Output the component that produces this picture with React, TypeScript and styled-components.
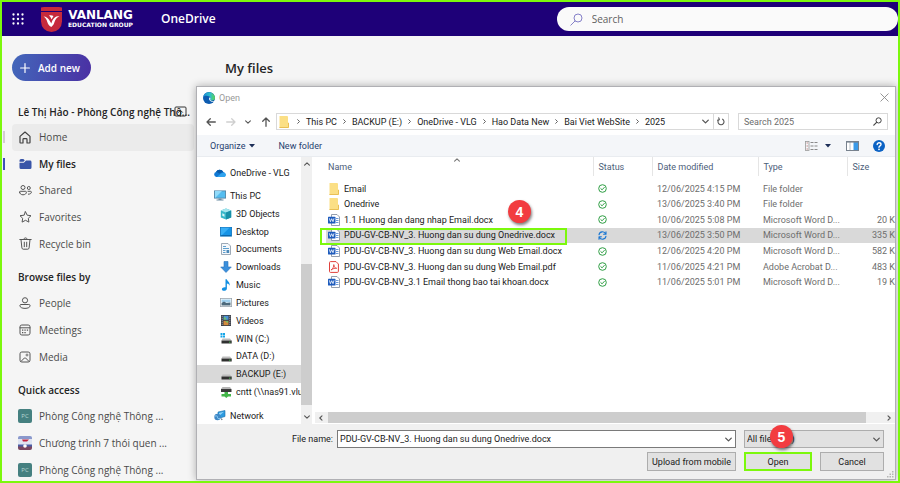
import React from 'react';
import styled, { createGlobalStyle } from 'styled-components';

const LIME = '#7cf80c';
const WEB_FONT = '"Open Sans", "Noto Sans", sans-serif';
const WIN_FONT = 'Roboto, "Noto Sans", sans-serif';

const Global = createGlobalStyle`
  * { box-sizing: border-box; }
  body { margin: 0; font: 400 10px/14px ${WEB_FONT}; color: #242424; }
  button, input, select { font: inherit; color: inherit; padding: 0; border: 0; background: none; border-radius: 0; outline: 0; }
  ul { list-style: none; margin: 0; padding: 0; }
  a { color: inherit; text-decoration: none; }
  svg { display: block; flex: none; }
`;

/* ---------- page shell ---------- */

const Page = styled.div`
  position: relative;
  height: 100vh;
  overflow: hidden;
  display: flex;
  flex-direction: column;
  background: #f5f5f5;
  border: 2px solid ${LIME};
`;

const TopBar = styled.header`
  display: grid;
  grid-template-columns: 13fr 8fr;
  align-items: center;
  height: 34px;
  flex: none;
  background: #1e0078;
  color: #fff;
`;

const Brand = styled.div`
  display: flex;
  align-items: center;
  padding-left: 10px;
`;

const IconButton = styled.button`
  display: flex;
  align-items: center;
  justify-content: center;
`;

const Logo = styled.a`
  display: flex;
  align-items: center;
  gap: 6px;
  margin: 0 24px 0 17px;
`;

const Wordmark = styled.span`
  display: flex;
  flex-direction: column;
  align-items: center;
  font-family: "DejaVu Sans", sans-serif;
  font-weight: 700;
`;

const WordmarkMain = styled.span`
  font-size: 12px;
  line-height: 11px;
`;

const WordmarkSub = styled.span`
  font-size: 6px;
  line-height: 8px;
  white-space: nowrap;
`;

const ProductName = styled.span`
  margin-left: 4px;
  font-size: 12px;
  line-height: 16px;
  font-weight: 600;
`;

const TopSearch = styled.label`
  display: flex;
  align-items: center;
  gap: 9px;
  height: 24px;
  padding-left: 13px;
  border-radius: 12px;
  background: #fafafa;
  color: #555;
  input { flex: 1; min-width: 0; }
  input::placeholder { color: #616161; opacity: 1; }
`;

const Body = styled.div`
  flex: 1;
  min-height: 0;
  display: flex;
`;

const Sidebar = styled.aside`
  width: 192px;
  flex: none;
  padding: 18px 0 0 10px;
`;

const AddNew = styled.button`
  display: flex;
  align-items: center;
  gap: 8px;
  height: 27px;
  padding: 0 11px 0 8px;
  border-radius: 14px;
  background: linear-gradient(100deg, #4368bb, #4a2fa3);
  color: #fff;
  font-weight: 600;
`;

const Owner = styled.h2`
  display: flex;
  align-items: center;
  margin: 24px 0 5px 6px;
  font-size: 10px;
  line-height: 14px;
  font-weight: 600;
  white-space: nowrap;
`;

const OwnerIcon = styled.span`
  margin-left: -16px;
`;

const GroupTitle = styled.h3`
  margin: 13px 0 6px 6px;
  font-size: 10px;
  line-height: 14px;
  font-weight: 600;
`;

const NavList = styled.ul<{ $height: number }>`
  display: flex;
  flex-direction: column;
  height: ${(p) => p.$height}px;
  li { flex: 1; display: flex; }
`;

const NavLink = styled.a<{ $hover?: boolean; $active?: boolean; $mark?: string }>`
  position: relative;
  flex: 1;
  display: flex;
  align-items: center;
  gap: 7px;
  padding-left: 6px;
  border-radius: 4px;
  white-space: nowrap;
  color: ${(p) => (p.$active ? '#242424' : '#4a4a4a')};
  font-weight: ${(p) => (p.$active ? 600 : 400)};
  background: ${(p) => (p.$hover ? '#ebebeb' : 'transparent')};
  &::before {
    content: '';
    position: absolute;
    left: -9px;
    width: 2px;
    height: 12px;
    background: ${(p) => p.$mark || 'transparent'};
  }
`;

const IconSlot = styled.span`
  width: 14px;
  display: flex;
  justify-content: center;
`;

const Tile = styled.span`
  display: flex;
  align-items: center;
  justify-content: center;
  width: 14px;
  height: 14px;
  border-radius: 2px;
  background: #458080;
  color: #b5d6d4;
  font-size: 6px;
  line-height: 8px;
`;

const Main = styled.main`
  flex: 1;
  padding: 22px 0 0 31px;
`;

const PageTitle = styled.h1`
  margin: 0;
  font-size: 13px;
  line-height: 20px;
  font-weight: 600;
`;

/* ---------- file dialog ---------- */

const Dialog = styled.section`
  position: absolute;
  top: 84px;
  left: 194px;
  right: 2px;
  display: flex;
  flex-direction: column;
  background: #fff;
  border: 1px solid #b0b0b4;
  box-shadow: 0 0 8px rgba(0, 0, 0, 0.3);
  font: 400 9px/12px ${WIN_FONT};
  color: #1a1a1a;
`;

const TitleBar = styled.div`
  display: flex;
  align-items: center;
  gap: 4px;
  height: 21px;
  padding: 0 6px;
  color: #999;
  button { margin-left: auto; }
`;

const AddressRow = styled.div`
  display: flex;
  align-items: center;
  height: 27px;
  padding: 0 7px 0 9px;
`;

const Arrows = styled.div`
  display: flex;
  align-items: center;
  justify-content: space-between;
  width: 65px;
  margin-right: 5px;
`;

const AddressBox = styled.div`
  flex: 1;
  display: flex;
  align-items: stretch;
  height: 17px;
  border: 1px solid #d9d9d9;
`;

const Crumbs = styled.nav`
  flex: 1;
  display: flex;
  align-items: center;
  gap: 5px;
  padding-left: 2px;
  white-space: nowrap;
  svg:first-child { margin-right: 2px; }
`;

const BoxButton = styled.button<{ $divided?: boolean }>`
  display: flex;
  align-items: center;
  justify-content: center;
  width: 15px;
  border-left: ${(p) => (p.$divided ? '1px solid #d9d9d9' : '0')};
`;

const DialogSearch = styled.label`
  display: flex;
  align-items: center;
  width: 150px;
  height: 17px;
  margin-left: 9px;
  padding: 0 5px;
  border: 1px solid #d9d9d9;
  input { flex: 1; min-width: 0; }
  input::placeholder { color: #6d6d6d; opacity: 1; }
`;

const CommandBar = styled.div`
  display: flex;
  align-items: center;
  height: 22px;
  padding: 0 10px 0 13px;
  background: #f4f6f9;
  border-bottom: 1px solid #e9ecf0;
  color: #25406e;
`;

const Command = styled.button<{ $gap?: number; $push?: boolean }>`
  display: flex;
  align-items: center;
  gap: 4px;
  margin-left: ${(p) => (p.$push ? 'auto' : `${p.$gap || 0}px`)};
`;

const Panes = styled.div`
  display: flex;
  height: 267px;
`;

const Tree = styled.nav`
  width: 104px;
  flex: none;
  overflow: hidden;
  padding-top: 7px;
`;

const Branch = styled.ul`
  height: 214px;
  margin: 6px 0;
  display: flex;
  flex-direction: column;
  li { flex: 1; display: flex; }
`;

const TreeItem = styled.button<{ $child?: boolean; $selected?: boolean }>`
  display: flex;
  align-items: center;
  gap: 4px;
  width: 100%;
  min-height: 17px;
  padding-left: ${(p) => (p.$child ? 23 : 17)}px;
  white-space: nowrap;
  background: ${(p) => (p.$selected ? '#d9d9d9' : 'transparent')};
`;

const TreeIcon = styled.span`
  width: 12px;
  display: flex;
  justify-content: center;
`;

const VBar = styled.div`
  width: 11px;
  flex: none;
  margin-right: 2px;
  display: flex;
  flex-direction: column;
  align-items: center;
  justify-content: space-between;
  padding: 4px 0;
  background: #f0f0f0;
`;

const VThumb = styled.div`
  width: 11px;
  height: 141px;
  margin-top: 88px;
  background: #cdcdcd;
`;

const ListPane = styled.div`
  flex: 1;
  min-width: 0;
  display: flex;
  flex-direction: column;
  justify-content: space-between;
`;

const FileTable = styled.table`
  width: calc(100% - 12px);
  height: 133px;
  margin-left: 12px;
  border-collapse: collapse;
  table-layout: fixed;
  td, th { padding: 0 0 0 5px; text-align: left; white-space: nowrap; font-weight: 400; }
  td:first-child, th:first-child { padding-left: 2px; }
  th { height: 19px; color: #4c607a; border-right: 1px solid #e5e5e5; }
  th:last-child { border-right: 0; }
  td { color: #6d6d6d; }
  td:first-child { color: #1a1a1a; }
  td:last-child { text-align: right; }
`;

const Col = styled.col<{ $w?: number }>`
  width: ${(p) => (p.$w ? `${p.$w}px` : 'auto')};
`;

const SpacerRow = styled.tr`
  height: 5px;
  line-height: 0;
`;

const FileRow = styled.tr<{ $selected?: boolean }>`
  background: ${(p) => (p.$selected ? '#d9d9d9' : 'transparent')};
`;

const FirstHead = styled.th`
  position: relative;
`;

const SortMark = styled.span`
  position: absolute;
  top: 0;
  left: 48%;
`;

const NameCell = styled.td`
  position: relative;
`;

const FileName = styled.span`
  display: flex;
  align-items: center;
  gap: 4px;
`;

const Marker = styled.span`
  position: absolute;
  top: 0;
  bottom: -2px;
  left: -6px;
  right: 26px;
  border: 2px solid ${LIME};
`;

const Badge = styled.span`
  position: absolute;
  z-index: 2;
  display: flex;
  align-items: center;
  justify-content: center;
  width: 23px;
  height: 23px;
  border-radius: 50%;
  background: #f23c40;
  box-shadow: 1px 2px 3px rgba(0, 0, 0, 0.5);
  color: #fff;
  font: 700 14px/16px "Liberation Sans", sans-serif;
`;

const RowBadge = styled(Badge)`
  right: 62px;
  bottom: 20px;
`;

const SelectBadge = styled(Badge)`
  left: 25px;
  top: -6px;
`;

const HBar = styled.div`
  display: flex;
  align-items: center;
  gap: 4px;
  height: 11px;
  padding: 0 3px;
  margin: 0 0 1px 1px;
  background: #f0f0f0;
`;

const HTrack = styled.div`
  flex: 1;
  height: 11px;
  padding-right: 16px;
`;

const HThumb = styled.div`
  height: 11px;
  background: #cdcdcd;
`;

const Footer = styled.form`
  position: relative;
  display: flex;
  flex-direction: column;
  gap: 4px;
  padding: 6px 11px 8px 0;
  background: #f0f0f0;
`;

const FooterRow = styled.div`
  display: flex;
  justify-content: flex-end;
  gap: 8px;
`;

const FieldLabel = styled.label`
  width: 136px;
  margin-right: -4px;
  line-height: 18px;
  text-align: right;
`;

const Combo = styled.div`
  flex: 1;
  display: flex;
  align-items: center;
  height: 18px;
  padding: 0 3px 0 2px;
  background: #fff;
  border: 1px solid #7a7a7a;
  input { flex: 1; min-width: 0; }
`;

const SelectWrap = styled.div`
  position: relative;
  width: 140px;
  height: 18px;
  display: flex;
  align-items: center;
  background: #e1e1e1;
  border: 1px solid #adadad;
  padding-right: 3px;
  select { appearance: none; flex: 1; min-width: 0; padding-left: 2px; }
`;

const PushButton = styled.button<{ $w: number; $primary?: boolean }>`
  width: ${(p) => p.$w}px;
  height: 19px;
  background: #e1e1e1;
  border: ${(p) => (p.$primary ? `2px solid ${LIME}` : '1px solid #adadad')};
`;

const Grip = styled.span`
  position: absolute;
  right: 1px;
  bottom: 1px;
`;

/* ---------- icons ---------- */

type SvgProps = { w?: number; h?: number; vb: string; children: React.ReactNode };
const Svg = ({ w = 12, h = 12, vb, children }: SvgProps) => (
  <svg width={w} height={h} viewBox={vb} fill="none" aria-hidden="true">
    {children}
  </svg>
);

const Line = ({ d, c = '#424242', sw = 1.2 }: { d: string; c?: string; sw?: number }) => (
  <path d={d} stroke={c} strokeWidth={sw} strokeLinecap="round" strokeLinejoin="round" />
);

const Waffle = () => (
  <Svg w={12} h={12} vb="0 0 12 12">
    {[1.5, 6, 10.5].map((y) =>
      [1.5, 6, 10.5].map((x) => <circle key={`${x}-${y}`} cx={x} cy={y} r="1.15" fill="#fff" />)
    )}
  </Svg>
);

const Shield = () => (
  <Svg w={21} h={25} vb="0 0 21 25">
    <path d="M0 .5 3 0h15l3 .5V4H0z" fill="#c62a3c" />
    <path d="M0 5h21v9.500a10.500 10.500 0 0 1-21 0z" fill="#c62a3c" />
    <path d="M2.500 9.500c2.700.2 4.700 1.500 6.200 4.200l1.600 2.800c1.200-4.500 3.500-7.300 8.200-7.500-2.600 1.500-4.200 3.400-5 6-.6 2-1.300 3.500-3.200 5-2.500-1.300-3.300-3-4-5-.6-2.700-1.800-4.200-3.800-5.500z" fill="#fff" />
    <path d="M8 8.500c1.500-.7 3-.3 4.500.6l-2 3.400c-.3-1.500-1-2.800-2.500-4z" fill="#fff" />
  </Svg>
);

const TopSearchIcon = () => (
  <Svg w={13} h={13} vb="0 0 13 13">
    <circle cx="8" cy="5" r="4" stroke="#8580c8" />
    <Line d="M5 8 .8 12.200" c="#8580c8" sw={1} />
  </Svg>
);

const HomeIcon = () => (
  <Svg w={12} h={13} vb="0 0 12 13">
    <Line d="M1 5.400 6 1l5 4.400V11.500a.5.5 0 0 1-.5.5H8V8.500a.8.8 0 0 0-.8-.8H4.800a.8.8 0 0 0-.8.8V12H1.500a.5.500 0 0 1-.5-.5z" />
  </Svg>
);

const FilesIcon = () => (
  <Svg w={13} h={12} vb="0 0 13 12">
    <path d="M.5 2.500A1.500 1.500 0 0 1 2 1h2.300l1.500 1.300L4.500 3.700H.5z" fill="#3955a8" />
    <path d="M.5 4.700h4.400L7 2.600h4A1.500 1.500 0 0 1 12.500 4v5.500A1.500 1.500 0 0 1 11 11H2A1.500 1.500 0 0 1 .5 9.500z" fill="#3955a8" />
  </Svg>
);

const SharedIcon = () => (
  <Svg w={13} h={12} vb="0 0 13 12">
    <circle cx="4" cy="3.500" r="2" stroke="#555" />
    <circle cx="9.800" cy="4" r="1.500" stroke="#555" />
    <Line d="M.6 8.200c0-.5.3-.9.9-.9h5c.6 0 .9.4.9.900 0 1.500-1.400 2.600-3.400 2.600S.6 9.700.6 8.200zM9 7.300h2.500c.5 0 .9.3.9.800 0 1.300-1.200 2.100-3 2.100" c="#555" sw={1} />
  </Svg>
);

const StarIcon = () => (
  <Svg w={13} h={12} vb="0 0 13 12">
    <Line d="m6.500.8 1.700 3.400 3.800.5-2.700 2.600.6 3.800-3.400-1.800-3.400 1.800.6-3.800L1 4.700l3.800-.5z" c="#555" sw={1} />
  </Svg>
);

const BinIcon = () => (
  <Svg w={13} h={13} vb="0 0 13 13">
    <Line d="M.8 2.500h11.400M4.800 2.300c0-2 3.400-2 3.400 0M2 2.700l.9 8.200c.1.700.6 1.300 1.300 1.300h4.600c.7 0 1.200-.6 1.300-1.300l.9-8.200M5.300 5.200v4.500M7.700 5.200v4.500" c="#555" sw={1} />
  </Svg>
);

const PersonIcon = () => (
  <Svg w={12} h={12} vb="0 0 12 12">
    <circle cx="6" cy="3.300" r="2.600" stroke="#555" />
    <Line d="M2.200 7.500h7.600c.8 0 1.300.5 1.300 1.100 0 1.700-2.100 2.800-5.100 2.800S.9 10.300.9 8.600c0-.6.5-1.100 1.300-1.100z" c="#555" sw={1} />
  </Svg>
);

const CalendarIcon = () => (
  <Svg w={12} h={12} vb="0 0 12 12">
    <rect x="1" y="1" width="10" height="10" rx="1.800" stroke="#555" />
    <Line d="M1 3.800h10" c="#555" sw={1} />
    <path d="M3 5.500h1.300v1.300H3zM5.400 5.500h1.300v1.300H5.400zM7.800 5.500h1.300v1.300H7.800zM3 7.900h1.300v1.300H3zM5.400 7.900h1.300v1.300H5.400z" fill="#555" />
  </Svg>
);

const PictureIcon = () => (
  <Svg w={12} h={12} vb="0 0 12 12">
    <rect x="1" y="1" width="10" height="10" rx="1.800" stroke="#555" />
    <circle cx="8" cy="4" r="1" stroke="#555" strokeWidth=".8" />
    <Line d="M2 10.400 5.400 7a.9.9 0 0 1 1.200 0L10 10.400" c="#555" sw={1} />
  </Svg>
);

const OwnerGlyph = () => (
  <Svg w={13} h={12} vb="0 0 13 12">
    <rect x="1" y="1" width="11" height="9" rx="1" stroke="#333" />
    <Line d="M6.500 10V4.500M4.500 6.300l2-2 2 2" c="#333" sw={1} />
  </Svg>
);

const Poster = () => (
  <Svg w={14} h={14} vb="0 0 14 14">
    <rect width="14" height="14" rx="2" fill="#dfe4f2" />
    <path d="M0 2a2 2 0 0 1 2-2h10a2 2 0 0 1 2 2v1H0z" fill="#8a98cc" />
    <path d="M4 3.500h7l-2 2H5z" fill="#c3203c" />
    <path d="M0 8.500h14V11H0z" fill="#4a5da5" />
    <path d="M0 10.500h14V12a2 2 0 0 1-2 2H2a2 2 0 0 1-2-2z" fill="#7a4660" />
    <circle cx="7" cy="10" r="1.800" fill="#fff" />
  </Svg>
);

const EdgeIcon = () => (
  <Svg w={12} h={12} vb="0 0 12 12">
    <defs>
      <linearGradient id="edgeTop" x1="0" y1="4" x2="12" y2="4" gradientUnits="userSpaceOnUse">
        <stop stopColor="#1b8ad8" />
        <stop offset=".6" stopColor="#2fc0c8" />
        <stop offset="1" stopColor="#5fd64e" />
      </linearGradient>
    </defs>
    <circle cx="6" cy="6" r="6" fill="#0d5cb0" />
    <path d="M.1 5.300A6 6 0 0 1 12 5.800c0 1.800-1.400 2.700-3 2.700-1.500 0-2.200-.6-1.800-1.100.5-.6.500-1.200.2-1.800C6.500 3.600 2 2.800.1 5.300z" fill="url(#edgeTop)" />
    <path d="M6.200 6c-.6 2 1.200 4 4.500 3.700l.6-.6c-1.900.3-3.900-.2-4.100-1.500.4-.7.4-1.200.2-1.800-.3-.4-.9-.4-1.200.2z" fill="#fff" />
  </Svg>
);

const CloseIcon = () => (
  <Svg w={9} h={9} vb="0 0 9 9"><Line d="m.8.8 7.400 7.400M8.200.8.8 8.200" c="#8a8a8a" sw={0.9} /></Svg>
);

const ArrowIcon = ({ dir, c = '#555' }: { dir: 'left' | 'right' | 'up'; c?: string }) => (
  <Svg w={10} h={10} vb="0 0 10 10">
    <Line
      c={c}
      sw={1.300}
      d={{ left: 'M9.300 5H1M4.300 1.700 1 5l3.300 3.300', right: 'M.7 5H9M5.700 1.700 9 5 5.700 8.300', up: 'M5 9.300V1M1.700 4.300 5 1l3.300 3.300' }[dir]}
    />
  </Svg>
);

const Chevron = ({ dir, c = '#555', size = 6 }: { dir: 'left' | 'right' | 'up' | 'down'; c?: string; size?: number }) => (
  <Svg w={size} h={size} vb="0 0 6 6">
    <Line
      c={c}
      sw={1.100}
      d={{ left: 'M4 .8 1.800 3 4 5.200', right: 'M2 .8 4.200 3 2 5.200', up: 'M.6 4.200 3 1.800l2.400 2.400', down: 'M.6 1.800 3 4.200l2.400-2.400' }[dir]}
    />
  </Svg>
);

const Caret = () => (
  <Svg w={6} h={4} vb="0 0 6 4"><path d="M0 0h6L3 3.600z" fill="#1d2f58" /></Svg>
);

const FolderIcon = () => (
  <Svg w={10} h={12} vb="0 0 10 12">
    <path d="M.5 0H8a1 1 0 0 1 1 1v6h1v5H.5z" fill="#fbdf85" />
    <path d="M9 6.500V12h1V7zM.5 11h9v1h-9z" fill="#e9bf55" />
  </Svg>
);

const RefreshIcon = () => (
  <Svg w={8} h={9} vb="0 0 8 9">
    <Line d="M5.600 2.200A3 3 0 1 1 2.100 2.400M1.700.8h.1l.6 2-2 .4" c="#555" sw={1.100} />
  </Svg>
);

const LoupeIcon = () => (
  <Svg w={9} h={9} vb="0 0 9 9">
    <circle cx="5.600" cy="3.400" r="2.600" stroke="#444" />
    <Line d="M3.600 5.400.8 8.200" c="#444" sw={1.200} />
  </Svg>
);

const ViewIcon = () => (
  <Svg w={13} h={10} vb="0 0 13 10">
    <rect x=".5" y=".5" width="3.500" height="9" stroke="#9a9a9a" strokeWidth=".8" />
    <path d="M1.500 2h1.500M1.500 5h1.500M1.500 8h1.500" stroke="#c98f8d" strokeWidth="1" />
    <path d="M5.500 1.500h3M9.500 1.500h3M5.500 5h3M9.500 5h3M5.500 8.500h3M9.500 8.500h3" stroke="#8a8a8a" />
  </Svg>
);

const PreviewIcon = () => (
  <Svg w={13} h={10} vb="0 0 13 10">
    <rect x=".5" y=".5" width="12" height="9" fill="#fff" stroke="#78828e" />
    <path d="M4 1v8" stroke="#b5bcc4" />
    <path d="M7.500 1H12v8H7.500z" fill="#3b9ae8" />
    <path d="M0 .8h13" stroke="#78828e" strokeWidth="1.600" />
  </Svg>
);

const HelpIcon = () => (
  <Svg w={12} h={12} vb="0 0 12 12">
    <circle cx="6" cy="6" r="6" fill="#0b62c4" />
    <Line d="M4.200 4.500C4.200 2.200 8 2.300 8 4.500 8 6 6 5.900 6 7.300" c="#fff" sw={1.400} />
    <circle cx="6" cy="9.300" r=".9" fill="#fff" />
  </Svg>
);

const CloudIcon = () => (
  <Svg w={12} h={8} vb="0 0 12 8">
    <path d="M2.500 8A2.500 2.500 0 0 1 2 3.100 4 4 0 0 1 9.300 3 2.600 2.600 0 0 1 9.500 8z" fill="#0f78d4" />
    <path d="M2 3.100A4 4 0 0 1 9.300 3C7.500 3 6.500 4.500 5.500 4.500S3.500 3 2 3.100z" fill="#0a5aa8" />
    <path d="M3 8l4-3.500c1.500-1.200 5-1 5 1.200C12 7.200 11 8 9.500 8z" fill="#2fa3ee" />
  </Svg>
);

const PcIcon = () => (
  <Svg w={12} h={11} vb="0 0 12 11">
    <rect x=".4" y=".9" width="11.200" height="7.200" fill="#54bdf0" stroke="#4d7f9f" strokeWidth=".8" />
    <path d="M1 8 8 1H1z" fill="#92dbfa" />
    <path d="M4.500 8.500h3v1h2v1h-7v-1h2z" fill="#6d8da3" />
  </Svg>
);

const CubeIcon = () => (
  <Svg w={12} h={12} vb="0 0 12 12">
    <path d="M6 .5 11.200 2.500v7L6 11.500.8 9.500v-7z" fill="#37b7c9" />
    <path d="M6 .5 11.200 2.500 6 4.500.8 2.500z" fill="#a5e6ee" />
    <path d="M6 4.500v7l5.200-2v-7z" fill="#1890a8" />
    <path d="M2.300 5.300 4.500 6.200v2.500l-2.200-.9z" fill="#d5f5f8" />
  </Svg>
);

const DesktopIcon = () => (
  <Svg w={12} h={10} vb="0 0 12 10">
    <rect x=".4" y=".4" width="11.200" height="8.700" fill="#1593e6" stroke="#0c74be" strokeWidth=".8" />
    <path d="M1 9 9.500.8H1z" fill="#38aef5" />
    <path d="M1 8.300h10v.8H1z" fill="#0b5a99" />
  </Svg>
);

const DocumentIcon = () => (
  <Svg w={10} h={12} vb="0 0 10 12">
    <path d="M.5.500H7L9.500 3v8.500h-9z" fill="#f5f8fb" stroke="#8796a5" strokeWidth=".8" />
    <path d="M2 3.500h3M2 5.500h6M2 7.500h2.500M2 9.500h2.500" stroke="#5fa0cf" />
    <path d="M5.500 7h2.700v3H5.500z" fill="#4a88b8" />
  </Svg>
);

const DownloadIcon = () => (
  <Svg w={12} h={12} vb="0 0 12 12"><path d="M4 .5h4V6h3.300L6 11.500.7 6H4z" fill="#3a8fdc" stroke="#2a72ba" strokeWidth=".6" /></Svg>
);

const MusicIcon = () => (
  <Svg w={10} h={12} vb="0 0 10 12">
    <path d="M4.500.3h1.300c.3 2 3.500 2.800 2.800 6.400-.6-1.500-1.500-2-2.700-2.200v5C5.900 11 4.500 11.800 3 11.800s-2.300-.8-2.100-1.900c.2-1.200 2-2 3.600-1.600z" fill="#1490e2" />
  </Svg>
);

const PhotoIcon = () => (
  <Svg w={12} h={9} vb="0 0 12 9">
    <rect x=".4" y=".4" width="11.200" height="8.200" fill="#fff" stroke="#9aa5ae" strokeWidth=".8" />
    <path d="M1.500 1.500h9v3h-9z" fill="#9fd0ee" />
    <path d="M1.500 5 4 3.500 6.500 5l4-.5v3h-9z" fill="#4d6a7c" />
  </Svg>
);

const VideoIcon = () => (
  <Svg w={10} h={11} vb="0 0 10 11">
    <rect width="10" height="11" fill="#3b3f48" />
    <path d="M2.500.8h5v4h-5z" fill="#4a92d8" />
    <path d="M2.500 5.800h5v4.400h-5z" fill="#d38b3d" />
    <path d="M3.500 1.500 6 4.500H2.500zM4 6h3v2z" fill="#6fc06a" />
    <path d="M1.200.8v10M8.800.8v10" stroke="#b9bdc6" strokeWidth=".9" strokeDasharray="1 1" />
  </Svg>
);

const DriveIcon = ({ kind }: { kind?: 'win' | 'net' }) => (
  <Svg w={12} h={11} vb="0 0 12 11">
    {kind === 'win' && <path d="M.5 0h2v2h-2zM3 0h2v2H3zM.5 2.500h2v2h-2zM3 2.500h2v2H3z" fill="#14a5e8" />}
    {kind === 'net' ? (
      <>
        <path d="M2.500 0h7.500l1.500 2H1z" fill="#b5b5b5" />
        <path d="M1 2h10.500v3H1z" fill="#3a3a3a" />
        <path d="M4.500 5h3.500v2H11v2.500H8L6.300 11 4.500 9.500H1.500V7h3z" fill="#43b649" />
      </>
    ) : (
      <>
        <path d="M2.500 5.500h7.500L11.500 7.500H1.500z" fill="#bdbdbd" />
        <path d="M1.500 7.500h10.200v3H1.500z" fill="#303030" />
        <path d="M9 8.700h1.500v.8H9z" fill="#4ce05a" />
      </>
    )}
  </Svg>
);

const NetworkIcon = () => (
  <Svg w={12} h={11} vb="0 0 12 11">
    <path d="M4 2 11 .5v6L4 8.500z" fill="#2d9be0" stroke="#1b6ea8" strokeWidth=".6" />
    <path d="M5 3 10 1.800 5 6z" fill="#8fd2f8" />
    <circle cx="3.500" cy="7" r="3.200" fill="#3f86c4" />
    <path d="M1 6c2-.5 3 .5 2.500 1.500S5 9 6 8.500" stroke="#8fd2f8" strokeWidth=".9" />
    <path d="M7 8l2 1.500-2 .8z" fill="#7a8a96" />
  </Svg>
);

const WordIcon = () => (
  <Svg w={12} h={12} vb="0 0 12 12">
    <path d="M3.500.5H9L11.500 3v8.500h-8z" fill="#fff" stroke="#7a8699" strokeWidth=".8" />
    <path d="M8 4.500h2.500M8 6.500h2.500M8 8.500h2.500" stroke="#5a8fd8" strokeWidth=".9" />
    <rect y="2.800" width="7.500" height="6.800" rx=".6" fill="#1d5bbd" />
    <Line d="m1.500 4.700.9 3 1.300-3 1.300 3 .9-3" c="#fff" sw={0.8} />
  </Svg>
);

const PdfIcon = () => (
  <Svg w={10} h={12} vb="0 0 10 12">
    <path d="M1.500.6H7L9.400 3v7.400a1 1 0 0 1-1 1h-6.900a1 1 0 0 1-1-1V1.600a1 1 0 0 1 1-1z" fill="#fff" stroke="#e0403c" />
    <Line d="M2.400 8.800C4 7.500 5 5.500 4.800 3.600 5 6 6 7.200 7.700 7.300 5.800 7 4.200 7.500 2.400 8.800z" c="#e0403c" sw={0.9} />
  </Svg>
);

const DoneIcon = () => (
  <Svg w={9} h={9} vb="0 0 9 9">
    <circle cx="4.500" cy="4.500" r="3.800" stroke="#2f9e44" />
    <Line d="m2.800 4.600 1.300 1.200 2.200-2.400" c="#2f9e44" sw={1} />
  </Svg>
);

const SyncIcon = () => (
  <Svg w={9} h={9} vb="0 0 9 9">
    <Line d="M1 3.800A3.500 3.500 0 0 1 7.700 3M8 .8V3.200H5.600M8 5.200A3.500 3.500 0 0 1 1.300 6M1 8.200V5.800H3.400" c="#1976d2" sw={1.100} />
  </Svg>
);

const GripIcon = () => (
  <Svg w={7} h={7} vb="0 0 7 7">
    <path d="M5 0h1.500v1.500H5zM5 2.500h1.500V4H5zM2.500 2.500H4V4H2.500zM5 5h1.500v1.500H5zM2.500 5H4v1.500H2.500zM0 5h1.500v1.500H0z" fill="#b5b5b5" />
  </Svg>
);

/* ---------- data ---------- */

const mainNav = [
  { label: 'Home', icon: <HomeIcon />, hover: true, mark: '#d3cbd3' },
  { label: 'My files', icon: <FilesIcon />, active: true, mark: '#3f52b8' },
  { label: 'Shared', icon: <SharedIcon /> },
  { label: 'Favorites', icon: <StarIcon /> },
  { label: 'Recycle bin', icon: <BinIcon /> },
];

const browseNav = [
  { label: 'People', icon: <PersonIcon /> },
  { label: 'Meetings', icon: <CalendarIcon /> },
  { label: 'Media', icon: <PictureIcon /> },
];

const quickNav = [
  { label: 'Phòng Công nghệ Thông ...', icon: <Tile>PC</Tile> },
  { label: 'Chương trình 7 thói quen ...', icon: <Poster /> },
  { label: 'Phòng Công nghệ Thông ...', icon: <Tile>PC</Tile> },
];

const crumbs = ['This PC', 'BACKUP (E:)', 'OneDrive - VLG', 'Hao Data New', 'Bai Viet WebSite', '2025'];

const branch = [
  { label: 'This PC', icon: <PcIcon />, child: false },
  { label: '3D Objects', icon: <CubeIcon /> },
  { label: 'Desktop', icon: <DesktopIcon /> },
  { label: 'Documents', icon: <DocumentIcon /> },
  { label: 'Downloads', icon: <DownloadIcon /> },
  { label: 'Music', icon: <MusicIcon /> },
  { label: 'Pictures', icon: <PhotoIcon /> },
  { label: 'Videos', icon: <VideoIcon /> },
  { label: 'WIN (C:)', icon: <DriveIcon kind="win" /> },
  { label: 'DATA (D:)', icon: <DriveIcon /> },
  { label: 'BACKUP (E:)', icon: <DriveIcon />, selected: true },
  { label: 'cntt (\\\\nas91.vlu', icon: <DriveIcon kind="net" /> },
];

const files = [
  { name: 'Email', kind: 'folder', date: '12/06/2025 4:15 PM', type: 'File folder', size: '' },
  { name: 'Onedrive', kind: 'folder', date: '13/06/2025 3:40 PM', type: 'File folder', size: '' },
  { name: '1.1 Huong dan dang nhap Email.docx', kind: 'word', date: '10/06/2025 5:08 PM', type: 'Microsoft Word D...', size: '20 K' },
  { name: 'PDU-GV-CB-NV_3. Huong dan su dung Onedrive.docx', kind: 'word', date: '13/06/2025 3:50 PM', type: 'Microsoft Word D...', size: '335 K', selected: true },
  { name: 'PDU-GV-CB-NV_3. Huong dan su dung Web Email.docx', kind: 'word', date: '12/06/2025 4:20 PM', type: 'Microsoft Word D...', size: '582 K' },
  { name: 'PDU-GV-CB-NV_3. Huong dan su dung Web Email.pdf', kind: 'pdf', date: '11/06/2025 4:21 PM', type: 'Adobe Acrobat D...', size: '483 K' },
  { name: 'PDU-GV-CB-NV_3.1 Email thong bao tai khoan.docx', kind: 'word', date: '11/06/2025 5:01 PM', type: 'Microsoft Word D...', size: '19 K' },
];

const fileIcons: Record<string, React.ReactNode> = {
  folder: <FolderIcon />,
  word: <WordIcon />,
  pdf: <PdfIcon />,
};

/* ---------- views ---------- */

type NavEntry = { label: string; icon: React.ReactNode; hover?: boolean; active?: boolean; mark?: string };

const NavGroup = ({ items, height }: { items: NavEntry[]; height: number }) => (
  <NavList $height={height}>
    {items.map((item, i) => (
      <li key={i}>
        <NavLink href="#" $hover={item.hover} $active={item.active} $mark={item.mark}>
          <IconSlot>{item.icon}</IconSlot>
          {item.label}
        </NavLink>
      </li>
    ))}
  </NavList>
);

const FileList = () => (
  <FileTable>
    <colgroup>
      <Col />
      <Col $w={59} />
      <Col $w={106} />
      <Col $w={89} />
      <Col $w={48} />
    </colgroup>
    <thead>
      <tr>
        <FirstHead>
          Name
          <SortMark><Chevron dir="up" c="#777" /></SortMark>
        </FirstHead>
        <th>Status</th>
        <th>Date modified</th>
        <th>Type</th>
        <th>Size</th>
      </tr>
      <SpacerRow aria-hidden="true" />
    </thead>
    <tbody>
      {files.map((f) => (
        <FileRow key={f.name} $selected={f.selected}>
          <NameCell>
            <FileName>
              <TreeIcon>{fileIcons[f.kind]}</TreeIcon>
              {f.name}
            </FileName>
            {f.selected && <Marker />}
            {f.selected && <RowBadge>4</RowBadge>}
          </NameCell>
          <td>{f.selected ? <SyncIcon /> : <DoneIcon />}</td>
          <td>{f.date}</td>
          <td>{f.type}</td>
          <td>{f.size}</td>
        </FileRow>
      ))}
    </tbody>
  </FileTable>
);

const OpenDialog = () => (
  <Dialog role="dialog" aria-label="Open">
    <TitleBar>
      <EdgeIcon />
      Open
      <IconButton aria-label="Close"><CloseIcon /></IconButton>
    </TitleBar>
    <AddressRow>
      <Arrows>
        <IconButton aria-label="Back"><ArrowIcon dir="left" /></IconButton>
        <IconButton aria-label="Forward"><ArrowIcon dir="right" c="#cfcfcf" /></IconButton>
        <IconButton aria-label="Recent"><Chevron dir="down" /></IconButton>
        <IconButton aria-label="Up"><ArrowIcon dir="up" /></IconButton>
      </Arrows>
      <AddressBox>
        <Crumbs>
          <FolderIcon />
          {crumbs.map((c) => (
            <React.Fragment key={c}>
              <Chevron dir="right" size={5} />
              <a href="#">{c}</a>
            </React.Fragment>
          ))}
        </Crumbs>
        <BoxButton aria-label="Previous locations"><Chevron dir="down" size={7} /></BoxButton>
        <BoxButton $divided aria-label="Refresh"><RefreshIcon /></BoxButton>
      </AddressBox>
      <DialogSearch>
        <input placeholder="Search 2025" aria-label="Search 2025" />
        <LoupeIcon />
      </DialogSearch>
    </AddressRow>
    <CommandBar>
      <Command>Organize <Caret /></Command>
      <Command $gap={23}>New folder</Command>
      <Command $push aria-label="View"><ViewIcon /></Command>
      <Command $gap={7} aria-label="View options"><Caret /></Command>
      <Command $gap={15} aria-label="Preview pane"><PreviewIcon /></Command>
      <Command $gap={14} aria-label="Help"><HelpIcon /></Command>
    </CommandBar>
    <Panes>
      <Tree aria-label="Folders">
        <TreeItem><TreeIcon><CloudIcon /></TreeIcon>OneDrive - VLG</TreeItem>
        <Branch>
          {branch.map((b) => (
            <li key={b.label}>
              <TreeItem $child={b.child !== false} $selected={b.selected}>
                <TreeIcon>{b.icon}</TreeIcon>
                {b.label}
              </TreeItem>
            </li>
          ))}
        </Branch>
        <TreeItem><TreeIcon><NetworkIcon /></TreeIcon>Network</TreeItem>
      </Tree>
      <VBar>
        <Chevron dir="up" />
        <VThumb />
        <Chevron dir="down" />
      </VBar>
      <ListPane>
        <FileList />
        <HBar>
          <Chevron dir="left" />
          <HTrack><HThumb /></HTrack>
          <Chevron dir="right" />
        </HBar>
      </ListPane>
    </Panes>
    <Footer onSubmit={(e) => e.preventDefault()}>
      <FooterRow>
        <FieldLabel htmlFor="file-name">File name:</FieldLabel>
        <Combo>
          <input id="file-name" defaultValue="PDU-GV-CB-NV_3. Huong dan su dung Onedrive.docx" />
          <Chevron dir="down" size={7} />
        </Combo>
        <SelectWrap>
          <select aria-label="File type">
            <option>All files (*.*)</option>
          </select>
          <Chevron dir="down" size={7} />
          <SelectBadge>5</SelectBadge>
        </SelectWrap>
      </FooterRow>
      <FooterRow>
        <PushButton type="button" $w={89}>Upload from mobile</PushButton>
        <PushButton type="submit" $w={68} $primary>Open</PushButton>
        <PushButton type="button" $w={64}>Cancel</PushButton>
      </FooterRow>
      <Grip><GripIcon /></Grip>
    </Footer>
  </Dialog>
);

export default function App() {
  return (
    <>
      <Global />
      <Page>
        <TopBar>
          <Brand>
            <IconButton aria-label="App launcher"><Waffle /></IconButton>
            <Logo href="#">
              <Shield />
              <Wordmark>
                <WordmarkMain>VANLANG</WordmarkMain>
                <WordmarkSub>EDUCATION GROUP</WordmarkSub>
              </Wordmark>
            </Logo>
            <ProductName>OneDrive</ProductName>
          </Brand>
          <TopSearch>
            <TopSearchIcon />
            <input placeholder="Search" aria-label="Search" />
          </TopSearch>
        </TopBar>
        <Body>
          <Sidebar>
            <AddNew>
              <Svg w={10} h={10} vb="0 0 10 10"><Line d="M5 .6v8.800M.6 5h8.800" c="#fff" sw={1.200} /></Svg>
              Add new
            </AddNew>
            <Owner>
              Lê Thị Hảo - Phòng Công nghệ Thô...
              <OwnerIcon><OwnerGlyph /></OwnerIcon>
            </Owner>
            <NavGroup items={mainNav} height={133} />
            <GroupTitle>Browse files by</GroupTitle>
            <NavGroup items={browseNav} height={80} />
            <GroupTitle>Quick access</GroupTitle>
            <NavGroup items={quickNav} height={80} />
          </Sidebar>
          <Main>
            <PageTitle>My files</PageTitle>
          </Main>
        </Body>
        <OpenDialog />
      </Page>
    </>
  );
}
